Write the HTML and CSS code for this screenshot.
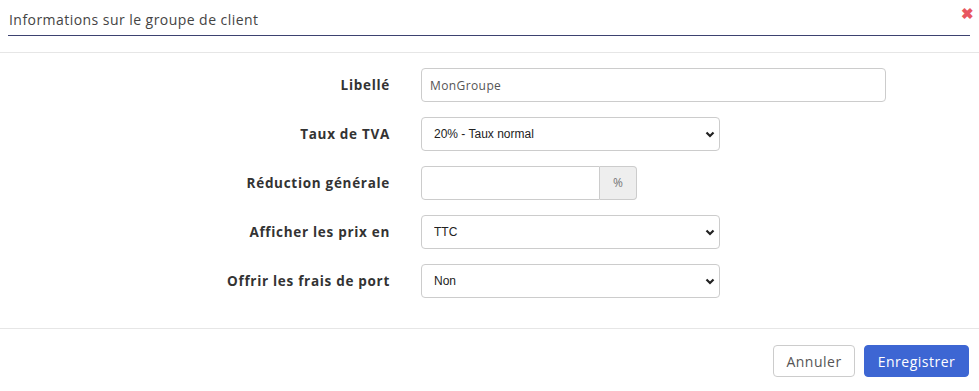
FILE: index.html
```html
<!DOCTYPE html>
<html lang="fr">
<head>
    <meta charset="UTF-8">
    <title>Informations sur le groupe de client</title>
    <link rel="stylesheet" href="styles.css">
</head>
<body>

    <div class="modal">
        <!-- Header -->
        <div class="modal-header">
            <div class="modal-title">Informations sur le groupe de client</div>
            <span class="close">&#10006;</span>
        </div>

        <!-- Form -->
        <form class="modal-body">
            <label class="label">Libellé</label>
            <input class="control wide" type="text" value="MonGroupe">

            <label class="label">Taux de TVA</label>
            <div class="select-wrap">
                <select class="control">
                    <option>20% - Taux normal</option>
                </select>
                <svg class="chevron" viewBox="0 0 10 7"><path d="M1.5 1.5 L5 5 L8.5 1.5" /></svg>
            </div>

            <label class="label">Réduction générale</label>
            <div class="input-group">
                <input class="control" type="text">
                <span class="addon">%</span>
            </div>

            <label class="label">Afficher les prix en</label>
            <div class="select-wrap">
                <select class="control">
                    <option>TTC</option>
                </select>
                <svg class="chevron" viewBox="0 0 10 7"><path d="M1.5 1.5 L5 5 L8.5 1.5" /></svg>
            </div>

            <label class="label">Offrir les frais de port</label>
            <div class="select-wrap">
                <select class="control">
                    <option>Non</option>
                </select>
                <svg class="chevron" viewBox="0 0 10 7"><path d="M1.5 1.5 L5 5 L8.5 1.5" /></svg>
            </div>
        </form>

        <!-- Footer -->
        <div class="modal-footer">
            <button class="btn btn-default">Annuler</button>
            <button class="btn btn-primary">Enregistrer</button>
        </div>
    </div>

</body>
</html>
```

FILE: styles.css
```css
body {
    margin: 0;
    background-color: #fff;
    font-family: "Open Sans", Arial, sans-serif;
    color: #333;
}
.modal {
    width: 979px;
}
.modal-header {
    position: relative;
    padding: 9px 9px 16px 8px;
    border-bottom: 1px solid #e6e6e6;
}
.modal-title {
    font-size: 14px;
    line-height: 22px;
    letter-spacing: 0.45px;
    color: #444;
    padding: 0 0 4px 1px;
    border-bottom: 1px solid #3d4270;
}
.close {
    position: absolute;
    top: 3px;
    right: 5px;
    color: #e8575f;
    font-size: 15px;
    font-weight: bold;
}
.modal-body {
    display: grid;
    grid-template-columns: 390px 1fr;
    column-gap: 31px;
    row-gap: 15px;
    align-items: center;
    padding: 15px 0 30px;
}
.label {
    text-align: right;
    font-size: 13.5px;
    font-weight: bold;
    letter-spacing: 0.7px;
    color: #333;
}
.control {
    box-sizing: border-box;
    height: 34px;
    border: 1px solid #ccc;
    border-radius: 4px;
    background: #fff;
    padding: 0 8px;
    outline: none;
}
input.control {
    font-family: "Open Sans", Arial, sans-serif;
    font-size: 12px;
    letter-spacing: 0.4px;
    color: #555;
}
.wide {
    width: 465px;
}
.select-wrap {
    position: relative;
    width: 299px;
}
.select-wrap select {
    width: 100%;
    -webkit-appearance: none;
    appearance: none;
    font-family: "Liberation Sans", Arial, sans-serif;
    font-size: 12px;
    color: #222;
    padding-left: 12px;
}
.chevron {
    position: absolute;
    right: 5px;
    top: 14px;
    width: 10px;
    height: 7px;
    fill: none;
    stroke: #222;
    stroke-width: 2.2;
}
.input-group {
    display: flex;
}
.input-group .control {
    width: 179px;
    border-radius: 4px 0 0 4px;
}
.addon {
    box-sizing: border-box;
    width: 37px;
    height: 34px;
    line-height: 32px;
    text-align: center;
    font-size: 12px;
    color: #777;
    background-color: #eee;
    border: 1px solid #ccc;
    border-left: none;
    border-radius: 0 4px 4px 0;
}
.modal-footer {
    display: flex;
    justify-content: flex-end;
    gap: 9px;
    padding: 16px 10px 0;
    border-top: 1px solid #e6e6e6;
}
.btn {
    height: 32px;
    padding: 0;
    font-family: "Open Sans", Arial, sans-serif;
    font-size: 14px;
    letter-spacing: 0.5px;
    border-radius: 4px;
    cursor: pointer;
}
.btn-default {
    width: 82px;
    background: #fff;
    border: 1px solid #ccc;
    color: #555;
}
.btn-primary {
    width: 105px;
    background-color: #3d66d3;
    border: 1px solid #3d66d3;
    color: #fff;
}
```
